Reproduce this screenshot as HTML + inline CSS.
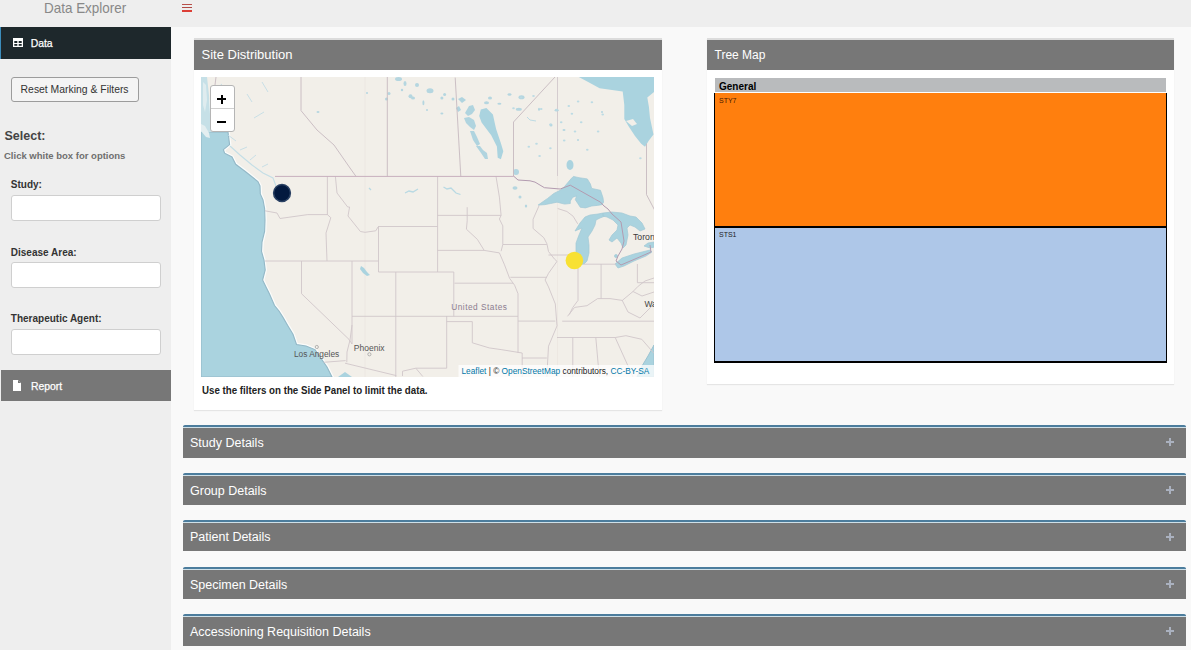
<!DOCTYPE html>
<html><head><meta charset="utf-8">
<style>
*{margin:0;padding:0;box-sizing:border-box}
html,body{width:1191px;height:650px;overflow:hidden;background:#f9f9f9;font-family:"Liberation Sans",sans-serif}
.a{position:absolute}
.t{position:absolute;line-height:1;white-space:nowrap}
#hdr{left:0;top:0;width:1191px;height:27px;background:#eeeeee}
#side{left:0;top:27px;width:171px;height:623px;background:#eeeeee}
.box{position:absolute;background:#fff;border-top:2px solid #dcdcdc;box-shadow:0 1px 1px rgba(0,0,0,0.08)}
.bh{position:absolute;left:0;top:0;right:0;height:30px;background:#777}
.bt{position:absolute;color:#fff;font-size:12.5px;line-height:1;white-space:nowrap}
.cb{position:absolute;left:183px;width:1003px;height:32px;border-top:2px solid #4c7d9d;background:#777;border-radius:2px 2px 0 0}
.cb .bt{left:7px;top:10px}
.plus{position:absolute;left:982.6px;top:10.7px;width:8px;height:8px}
.plus:before{content:"";position:absolute;left:0;top:3px;width:8px;height:2px;background:#aab1bf}
.plus:after{content:"";position:absolute;left:3px;top:0;width:2px;height:8px;background:#aab1bf}
.cb:before{content:"";position:absolute;left:0;top:0;right:0;height:1px;background:#cfe0e8}
.inp{position:absolute;left:11px;width:150px;height:26px;background:#fff;border:1px solid #cfcfcf;border-radius:3px}
.lbl{position:absolute;left:10.8px;font-size:10px;font-weight:bold;color:#333;line-height:1;white-space:nowrap}
</style></head><body>
<div id="hdr" class="a"></div>
<div class="t" style="left:44.3px;top:0.6px;font-size:14.5px;color:#888;transform:scaleX(0.927);transform-origin:0 0">Data Explorer</div>
<div class="a" style="left:182.2px;top:3.5px;width:9.7px;height:1.5px;background:#b9504a"></div>
<div class="a" style="left:182.2px;top:6.8px;width:9.7px;height:1.5px;background:#b04a45"></div>
<div class="a" style="left:182.2px;top:10px;width:9.7px;height:1.9px;background:#dc3f36"></div>
<div id="side" class="a"></div>
<!-- Data active item -->
<div class="a" style="left:0;top:27px;width:171px;height:31.5px;background:#1e282c;border-left:1px solid #3c8dbc"></div>
<svg class="a" style="left:13px;top:38px" width="10" height="9" viewBox="0 0 10 9"><rect x="0" y="0" width="10" height="9" fill="#fff"/><rect x="1.3" y="3" width="3" height="2" fill="#1e282c"/><rect x="5.7" y="3" width="3" height="2" fill="#1e282c"/><rect x="1.3" y="6" width="3" height="1.8" fill="#1e282c"/><rect x="5.7" y="6" width="3" height="1.8" fill="#1e282c"/></svg>
<div class="t" style="left:30.7px;top:38.8px;font-size:10.4px;color:#fff;-webkit-text-stroke:0.25px #fff">Data</div>
<!-- reset button -->
<div class="a" style="left:11px;top:77px;width:128px;height:25px;background:#f4f4f4;border:1px solid #9c9c9c;border-radius:3px"></div>
<div class="t" style="left:20.6px;top:85.2px;font-size:10.4px;color:#333">Reset Marking &amp; Filters</div>
<div class="t" style="left:4.5px;top:129.8px;font-size:12.5px;font-weight:bold;color:#444">Select:</div>
<div class="t" style="left:4px;top:150.8px;font-size:9.5px;font-weight:bold;color:#6f6f6f">Click white box for options</div>
<div class="lbl" style="top:179.8px">Study:</div>
<div class="inp" style="top:195px"></div>
<div class="lbl" style="top:247.9px">Disease Area:</div>
<div class="inp" style="top:262px"></div>
<div class="lbl" style="top:313.8px">Therapeutic Agent:</div>
<div class="inp" style="top:329px"></div>
<!-- report -->
<div class="a" style="left:1px;top:370px;width:170px;height:31px;background:#777"></div>
<svg class="a" style="left:13px;top:380px" width="8" height="11" viewBox="0 0 8 11"><path d="M0 0H5L8 3V11H0Z" fill="#fff"/><path d="M5 0V3H8" fill="#777"/></svg>
<div class="t" style="left:30.9px;top:381.7px;font-size:10.4px;color:#fff;-webkit-text-stroke:0.25px #fff">Report</div>

<!-- Site Distribution box -->
<div class="box" style="left:194px;top:38px;width:468px;height:372px">
  <div class="bh"></div>
  <div class="bt" style="left:7.5px;top:7.8px;font-size:13px">Site Distribution</div>
  <div id="map" class="a" style="left:7px;top:37px;width:453px;height:300px;background:#f2efe9;overflow:hidden">
<svg class="a" style="left:0;top:0" width="453" height="300" viewBox="201 77 453 300">
<rect x="201" y="77" width="453" height="300" fill="#f2efe9"/>
<g fill="none" stroke="#ebe6e0" stroke-width="0.8">
<path d="M365 77V377M557.5 176V377"/><path d="M557.5 77V176" stroke="#cdc3c8"/>
</g>
<!-- Pacific -->
<path fill="none" stroke="#fbfcfb" stroke-width="3.6" d="M201 77H204L206 90L208 104L209 118L210 132L228 132L229.6 144.6L223.4 149.6L224.6 153.2L232 157L235.7 164.3L245.6 171.7L257.9 181.6L260 186L260.3 193.9L263 200L264.6 208.5L265 220L264.6 231.5L262 242L261.5 251.5L264 260L265.2 270L262.6 280L266 287L269.4 293.7L274.5 305.5L279 311L283 317.4L288 326L293 334.3L296.5 344.5L306 346L315 349.6L322 359.7L327 367L332 377H201Z"/>
<path fill="#aad3df" d="M201 77H204L206 90L208 104L209 118L210 132L228 132L229.6 144.6L223.4 149.6L224.6 153.2L232 157L235.7 164.3L245.6 171.7L257.9 181.6L260 186L260.3 193.9L263 200L264.6 208.5L265 220L264.6 231.5L262 242L261.5 251.5L264 260L265.2 270L262.6 280L266 287L269.4 293.7L274.5 305.5L279 311L283 317.4L288 326L293 334.3L296.5 344.5L306 346L315 349.6L322 359.7L327 367L332 377H201Z"/>
<path fill="none" stroke="#93b8c7" stroke-width="1.1" d="M201 77H204L206 90L208 104L209 118L210 132L228 132L229.6 144.6L223.4 149.6L224.6 153.2L232 157L235.7 164.3L245.6 171.7L257.9 181.6L260 186L260.3 193.9L263 200L264.6 208.5L265 220L264.6 231.5L262 242L261.5 251.5L264 260L265.2 270L262.6 280L266 287L269.4 293.7L274.5 305.5L279 311L283 317.4L288 326L293 334.3L296.5 344.5L306 346L315 349.6L322 359.7L327 367L332 377H201Z"/>
<!-- Haida Gwaii strip -->
<path fill="#c6e0e7" d="M201 77H207L209 95L210 115L211 132H201Z"/>
<path fill="#e4eef0" d="M201 124L205 126L209 133L210 138L206 137L201 131Z"/>
<path fill="#dfecef" d="M203 82L206 85L207 100L205 112L203 105Z"/>
<!-- inner strait -->
<path fill="none" stroke="#c4dee6" stroke-width="1.1" d="M230 146L240 155L252 165L263 173L273 178L276 186"/>
<path fill="none" stroke="#c3dde5" stroke-width="0.9" d="M228 135L236 141M240 150L247 147M250 160L256 155M262 167L268 164M215 90L222 84M247 94L252 102M262 82L268 92M254 118L264 112"/>
<!-- Gulf of California -->
<path fill="#aad3df" d="M338 377L345 372L352 377Z"/>
<!-- Atlantic bottom right -->
<path fill="#aad3df" stroke="#9cc3d1" stroke-width="1" d="M654 345L648 356L642 366L637 377H654Z"/>
<!-- Hudson/James Bay -->
<path fill="#aad3df" d="M578.8 77L590 83L599.6 88.3L612 90L622.7 91.4L624.3 105L624.3 119L628.9 126.8L635 136L641.2 143.7L645 146.8L648.9 140.6L653.5 134.5L650 118L648.9 106.8L647.3 97.5L654.8 91.4V77Z"/>
<path fill="#f2efe9" d="M626 121L633 119L637 124L632 126Z"/>
<!-- Lake Winnipeg etc -->
<path fill="#aad3df" d="M480.8 109.6L486.4 108L492.9 114.4L496.1 128.9L500.9 143.3L503.3 151.3L500.9 159.3L497.7 157.7L496.9 146.5L491.2 135.3L481.6 122.4L479.2 116Z"/>
<g fill="#b0d4df">
<path d="M465 113L469 106L473 105L475 110L472 114L468 116Z"/>
<path d="M464 118L469 117L474 120L476 126L474 130L470 127L466 123Z"/>
<path d="M470 131L474 131L477 137L480 144L477 146L473 140Z"/>
<path d="M476 146L480 146L483 150L487 153L488 159L485 159L481 153Z"/>
<path d="M458 99L462 97L466 100L462 103Z"/><path d="M456 108L459 106L461 110L458 112Z"/>
</g>
<ellipse cx="570" cy="165" rx="3.5" ry="5" fill="#aad3df"/>
<ellipse cx="516" cy="172" rx="3" ry="3" fill="#b2d6e1"/>
<g fill="#b5d6e0">
<ellipse cx="398.5" cy="79" rx="3.5" ry="2"/><ellipse cx="405" cy="83.4" rx="1.5" ry="2.5"/><ellipse cx="417" cy="85" rx="2" ry="2"/><ellipse cx="430" cy="90.8" rx="3.5" ry="2.5"/>
<ellipse cx="389" cy="93.5" rx="1.5" ry="1.5"/><ellipse cx="386.5" cy="99" rx="1.5" ry="1.5"/><ellipse cx="402" cy="90" rx="1.2" ry="1.2"/><ellipse cx="410.5" cy="96.3" rx="2" ry="2"/>
<ellipse cx="413" cy="98" rx="2" ry="1.5"/><ellipse cx="423.4" cy="102.8" rx="1" ry="2.5"/><ellipse cx="444.6" cy="94.5" rx="1.5" ry="1.5"/><ellipse cx="441.9" cy="98" rx="1.5" ry="1.5"/>
<ellipse cx="453" cy="99" rx="1.5" ry="1.5"/><ellipse cx="427" cy="110" rx="1" ry="1"/><ellipse cx="441.9" cy="113.4" rx="1.5" ry="1"/><ellipse cx="367" cy="93" rx="1" ry="1"/>
<ellipse cx="521.5" cy="97.2" rx="3" ry="2"/><ellipse cx="509.5" cy="94.5" rx="2" ry="1.2"/><ellipse cx="518.8" cy="109.2" rx="3" ry="1.5"/><ellipse cx="490" cy="98" rx="2" ry="1.5"/>
<ellipse cx="486.5" cy="102.8" rx="2.5" ry="1.5"/><ellipse cx="499.4" cy="103.7" rx="2" ry="1"/><ellipse cx="556.6" cy="110.2" rx="2" ry="1.2"/><ellipse cx="551" cy="125" rx="1.5" ry="1.5"/>
<ellipse cx="539" cy="109.2" rx="1" ry="1.5"/><ellipse cx="515" cy="188" rx="2.5" ry="1.8"/><ellipse cx="520" cy="197" rx="1.5" ry="1.5"/><ellipse cx="526" cy="206" rx="1.2" ry="1.5"/>
<ellipse cx="564" cy="130" rx="1.5" ry="1"/><ellipse cx="578" cy="140" rx="1" ry="1"/><ellipse cx="602" cy="112" rx="1" ry="1"/><ellipse cx="318" cy="112" rx="1.5" ry="1"/>
</g>
<g fill="#bcdbe4"><ellipse cx="578.1" cy="101.4" rx="1.3" ry="1"/><ellipse cx="561.2" cy="122.2" rx="1.3" ry="1"/><ellipse cx="571.9" cy="113.7" rx="1.3" ry="1"/><ellipse cx="568.8" cy="106.0" rx="1.3" ry="1"/><ellipse cx="550.4" cy="124.5" rx="1.3" ry="1"/><ellipse cx="536.5" cy="143.7" rx="1.3" ry="1"/><ellipse cx="528.8" cy="146.8" rx="1.3" ry="1"/><ellipse cx="550.4" cy="148.3" rx="1.3" ry="1"/><ellipse cx="539.6" cy="156.0" rx="1.3" ry="1"/><ellipse cx="591.9" cy="102.2" rx="1.3" ry="1"/><ellipse cx="598.1" cy="131.4" rx="1.3" ry="1"/><ellipse cx="640.4" cy="158.3" rx="1.3" ry="1"/><ellipse cx="581.2" cy="122.2" rx="1.3" ry="1"/><ellipse cx="575.0" cy="131.4" rx="1.3" ry="1"/><ellipse cx="564.2" cy="140.6" rx="1.3" ry="1"/><ellipse cx="556.5" cy="109.8" rx="1.3" ry="1"/><ellipse cx="541.2" cy="109.1" rx="1.3" ry="1"/><ellipse cx="533.5" cy="96.0" rx="1.3" ry="1"/><ellipse cx="521.2" cy="97.5" rx="1.3" ry="1"/><ellipse cx="513.5" cy="108.3" rx="1.3" ry="1"/><ellipse cx="587.3" cy="149.8" rx="1.3" ry="1"/><ellipse cx="602.7" cy="114.5" rx="1.3" ry="1"/></g><path fill="none" stroke="#bddbe4" stroke-width="1" d="M527 117L530 120L536 121"/>
<path fill="none" stroke="#b8d9e3" stroke-width="1.3" d="M443.5 187L447 189L451 188L456 193L460.5 194.5M405 193L409 191L413 192L418 189M369 188L371 190"/>
<path fill="#aad3df" d="M361 266L364 268L367 272L370 275L367 276L363 273L360 269Z"/>
<!-- Great Lakes -->
<g fill="#aad3df" stroke="#a2c8d5" stroke-width="0.7">
<path d="M538.1 205.1L547.6 198.4L553.9 193.4L560.2 190.3L564.6 186.5L567.7 182.7L571.5 178.3L573.4 176.4L579.1 177.7L587.3 178.9L590.4 184L591.7 188.4L600.5 190.3L603 197.8L603.6 202.2L601.8 204.7L597.3 205.4L591.7 206L585.4 207.9L580.3 207.3L577.8 203.5L575.3 199.7L576.6 195.9L572.8 197.2L570.3 201L570.3 203.5L564.6 204.1L557 202.2L550.7 203.5L544.4 204.7Z"/>
<path d="M575 231L580 223L585 217L590 215L598 214L603 213L605 216L600 218L596 220L595 225L592 231L588 237L589 245L589 253L587 261L584 264L578 265L576 252L576 243L579 235L582 228Z"/>
<path d="M603 213L612 212L622 213L630 216L636 217L642 223L645 229L640 231L635 227L630 225L627 228L628 235L626 245L623 248L621 243L617 238L612 242L609 240L612 235L617 230L618 225L613 220L607 217L603 216Z"/>
<path d="M615 264L622 258L634 254L646 251L650 250L652 252L646 256L634 261L624 266L618 268Z"/>
<path d="M644 246L648 243L654 242L655 247L650 248Z"/>
<ellipse cx="616" cy="256" rx="1.5" ry="1.5"/>
</g>
<!-- state boundaries -->
<g fill="none" stroke="#d0c6ca" stroke-width="0.9">
<!-- WA/OR/ID -->
<path d="M265 210.8L277 213L280 218.5L307.7 214.6L327.7 214.6M327.4 176.4V214.6L330.8 217.7L326 233L327 261M265 261H378.5"/>
<path d="M335.4 176.4L337 193L347.7 207L349.6 207L348 216L360.4 231.5L365 232.3L375.8 230.8L378 227M378.5 226.5V272H453.8M378 226.5H437.6"/>
<path d="M301.5 261V293.7L349 339.4L352 344L352 325M352 261V325M352 325L350 340L347 352L346.8 362.3"/>
<path d="M352 316.3H518M395.8 272V377M437.6 176.4V272M453.8 272V316.3M437.6 215.4H501.1M437.6 250.4H484.2"/>
<path d="M446.7 316V368.2H415.8L422.8 376.5M446.7 321.6H472.3V342.8L489.2 347.9L501.1 349.6L522.2 353V377M454.5 283.2H513"/>
<path d="M484.2 250.4L499.4 252.9L504.5 264.8L509.6 278.3L514.6 285.2L518 293.7V353M518 321.1H555.3M522 358H546.8M510.4 277.3H546.8M502.8 244.5H546.8"/>
<path d="M496 176.4L499.4 197.1L501.1 215.4L499.4 219L502.8 225.9V244.5L501.1 251.2"/>
<path d="M467.2 207.2V220.8L466.4 229.2L477.4 239.4L484.2 250.4"/>
<path d="M539.2 205.4L533.1 219.2L533.1 228.5L543.8 237.7L546.9 243.8L548.5 251.5L554.6 259.2L557 261.4L548.5 273.3L545.1 280L548.5 286.9L555.3 303.9L557 325.9L548.5 346.2L546.8 377"/>
<path d="M557.7 208.5L566.9 211.5L573.1 216.2L577.7 223.8M548.5 255H577M583.8 264.2H616"/>
<path d="M578 264V300.4L572.8 307.4L569.3 314.5M567.5 316.3L574.6 307.4L587 305.7L597.6 298.6L610 298.6L622.3 300.4L633 291.5L638.2 286.2L645 281L654 278M601.1 264V298.6M637.4 264V282.7M637.4 282.7H654"/>
<path d="M562.2 321.2H654M557 337.5H615.2L625.9 335.7L641.8 339.3L654 353.4M572.8 337.5V377M595.8 337.5L599.3 377M615.2 337.5L633 377"/>
<path d="M622 300L628 312L640 318L648 310L654 304M633 291.5L642 296L654 292"/>
<path d="M402.5 376V371.2L415.8 368.2M345 363.2L396.3 375.6M323.6 362.3L345.6 360.6"/>
</g>
<!-- Provinces -->
<g fill="none" stroke="#c6b9c0" stroke-width="0.9">
<path d="M301 77V110.6L317 130L334 145L350 168L356 176.4"/>
<path d="M387.3 77V176.4M455.2 77.6L460.8 176.4M555 77L513.5 122V176.4M646.5 143.7V194.6L654.6 210"/>
<path d="M216 77L215 85"/>
</g>
<!-- international -->
<g fill="none" stroke="#c7afbd" stroke-width="1">
<path d="M275 176.4H513.5"/>
<path d="M513.5 176L518 180L530 180.8L535 182.1L544.4 187.7L560.2 189L570.3 185.2L600.5 202.2L604 206L608 209L612 214L621 222L624 241L622 249L618 256L616 261L621 265L635 259L651 252L650 245" stroke="#b39bb0"/>
</g>
<!-- labels -->
<g font-family="Liberation Sans, sans-serif" font-size="8.3" fill="#555">
<text x="294" y="357.2">Los Angeles</text>
<text x="353.8" y="350.8" font-size="8.5">Phoenix</text>
<text x="633" y="239.5" fill="#3a3a3a" font-size="8.7">Toronto</text>
<text x="644.4" y="306.6" fill="#444" font-size="8.5">Washington</text>
<text x="451.2" y="310.3" fill="#8c7d90" letter-spacing="0.5">United States</text>
</g>
<circle cx="316.8" cy="347" r="1.6" fill="none" stroke="#999" stroke-width="0.7"/>
<circle cx="369.4" cy="354.3" r="1.6" fill="none" stroke="#999" stroke-width="0.7"/>
<!-- markers -->
<circle cx="282" cy="193" r="8.4" fill="#03193f" stroke="#2a4163" stroke-width="1.5"/>
<circle cx="574.4" cy="260.5" r="8.8" fill="#f8e133"/>
<!-- attribution -->
<rect x="458.5" y="365" width="196" height="12" fill="#ffffff" fill-opacity="0.75"/>
<g font-family="Liberation Sans, sans-serif" font-size="8.3" >
<text x="461.5" y="373.6" fill="#0078a8">Leaflet<tspan fill="#222"> | © </tspan>OpenStreetMap<tspan fill="#222"> contributors, </tspan>CC-BY-SA</text>
</g>
</svg>
<div class="a" style="left:8.5px;top:8.2px;width:25px;height:47px;background:#fff;border:1px solid #b5b5b5;border-radius:3px"></div>
<div class="a" style="left:9.5px;top:31px;width:23px;height:1px;background:#d0d0d0"></div>
<div class="a" style="left:16.2px;top:21.4px;width:9px;height:2px;background:#000"></div>
<div class="a" style="left:19.7px;top:18px;width:2px;height:9px;background:#000"></div>
<div class="a" style="left:16.2px;top:44px;width:9px;height:2px;background:#000"></div>
</div>
  <div class="t" style="left:7.5px;top:345px;font-size:10.5px;font-weight:bold;color:#222;transform:scaleX(0.927);transform-origin:0 0">Use the filters on the Side Panel to limit the data.</div>
</div>

<!-- Tree Map box -->
<div class="box" style="left:707px;top:38px;width:467px;height:346px">
  <div class="bh"></div>
  <div class="bt" style="left:7.5px;top:8.7px;font-size:12px">Tree Map</div>
  <div class="a" style="left:8px;top:38px;width:451px;height:14px;background:#b9bbbd"></div>
  <div class="t" style="left:12px;top:42px;font-size:10px;font-weight:bold;color:#000">General</div>
  <div class="a" style="left:7px;top:53px;width:453px;height:135px;background:#ff7f0e;border:1px solid #000;border-top:none;border-bottom:2px solid #000"></div>
  <div class="t" style="left:12px;top:56.5px;font-size:7px;color:#4a1a00">STY7</div>
  <div class="a" style="left:7px;top:188px;width:453px;height:135px;background:#aec7e8;border:1px solid #000;border-top:none;border-bottom:2px solid #000"></div>
  <div class="t" style="left:12px;top:191px;font-size:7px;color:#222">STS1</div>
</div>

<!-- collapsible boxes -->
<div class="cb" style="top:425px;height:33px"><div class="bt" style="top:10.2px">Study Details</div><div class="plus"></div></div>
<div class="cb" style="top:473px"><div class="bt" style="top:10.2px">Group Details</div><div class="plus"></div></div>
<div class="cb" style="top:520px;height:31px"><div class="bt" style="top:9.4px">Patient Details</div><div class="plus"></div></div>
<div class="cb" style="top:567px"><div class="bt" style="top:10.2px">Specimen Details</div><div class="plus"></div></div>
<div class="cb" style="top:614px"><div class="bt" style="top:10.2px">Accessioning Requisition Details</div><div class="plus"></div></div>
</body></html>
